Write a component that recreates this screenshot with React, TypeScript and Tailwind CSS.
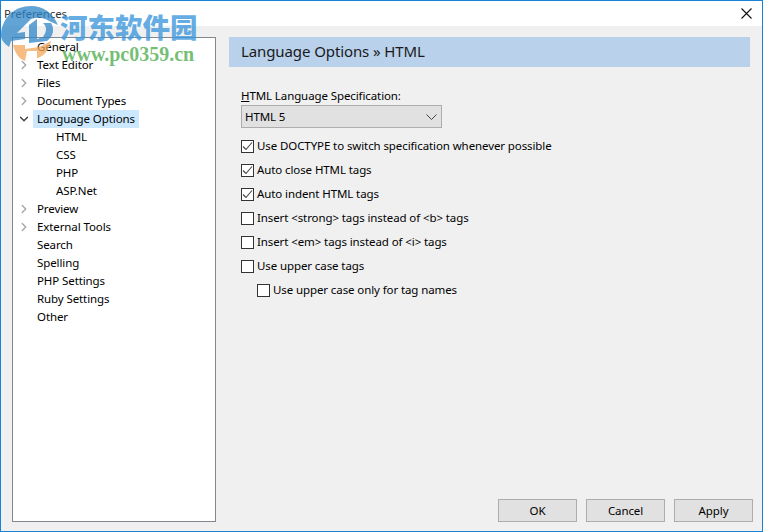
import { ChevronDown, ChevronRight } from 'lucide-react';

const tree = [
  { label: 'General' },
  { label: 'Text Editor', arrow: 'right' },
  { label: 'Files', arrow: 'right' },
  { label: 'Document Types', arrow: 'right' },
  { label: 'Language Options', arrow: 'down', selected: true },
  { label: 'HTML', child: true },
  { label: 'CSS', child: true },
  { label: 'PHP', child: true },
  { label: 'ASP.Net', child: true },
  { label: 'Preview', arrow: 'right' },
  { label: 'External Tools', arrow: 'right' },
  { label: 'Search' },
  { label: 'Spelling' },
  { label: 'PHP Settings' },
  { label: 'Ruby Settings' },
  { label: 'Other' },
];

const options = [
  { label: 'Use DOCTYPE to switch specification whenever possible', checked: true },
  { label: 'Auto close HTML tags', checked: true },
  { label: 'Auto indent HTML tags', checked: true },
  { label: 'Insert <strong> tags instead of <b> tags' },
  { label: 'Insert <em> tags instead of <i> tags' },
  { label: 'Use upper case tags' },
  { label: 'Use upper case only for tag names', indent: true },
];

function Check({ checked }: { checked?: boolean }) {
  return (
    <span className="w-[13px] h-[13px] shrink-0 border border-[#333333] bg-white flex items-center justify-center">
      {checked && (
        <svg width="11" height="11" viewBox="0 0 11 11" fill="none">
          <path d="M1 5.5 L4 8.5 L10 1.5" stroke="#444444" strokeWidth="1.1" />
        </svg>
      )}
    </span>
  );
}

function Btn({ label }: { label: string }) {
  return (
    <button className="w-[79px] h-[23px] bg-[#e1e1e1] border border-[#adadad] text-[11.5px] tracking-[-0.1px] text-black leading-none">
      {label}
    </button>
  );
}

export default function App() {
  return (
    <div className="relative w-[763px] h-[532px] overflow-hidden border border-[#1883d7] bg-[#f0f0f0] text-black font-['Noto_Sans','Open_Sans',sans-serif] text-[11.5px] tracking-[-0.1px]">
      {/* Title bar */}
      <div className="h-[25px] bg-white flex items-center justify-between pl-[3px] pr-[10px]">
        <span className="text-[#333333]">Preferences</span>
        <svg width="11" height="11" viewBox="0 0 11 11" fill="none">
          <path d="M0.5 0.5 L10.5 10.5 M10.5 0.5 L0.5 10.5" stroke="#111111" strokeWidth="1.1" />
        </svg>
      </div>

      <div className="flex h-[505px]">
        {/* Tree */}
        <div className="ml-[11px] mt-[11px] w-[204px] h-[485px] border border-[#828790] bg-white">
          {tree.map((item) => (
            <div key={item.label} className="h-[18px] flex items-center">
              <span className="w-[20px] ml-[1px] -mr-[1px] flex justify-center shrink-0">
                {item.arrow === 'right' && <ChevronRight className="w-[14px] h-[14px] text-[#a6a6a6]" strokeWidth={2.4} />}
                {item.arrow === 'down' && <ChevronDown className="w-[14px] h-[14px] text-[#404040]" strokeWidth={2.4} />}
              </span>
              <span
                className={`h-[18px] leading-[18px] pl-[4px] pr-[4px] ${item.child ? 'ml-[19px]' : ''} ${item.selected ? 'bg-[#cce8ff]' : ''}`}
              >
                {item.label}
              </span>
            </div>
          ))}
        </div>

        {/* Content */}
        <div className="flex-1 flex flex-col ml-[13px] mt-[11px]">
          <div className="w-[521px] h-[30px] bg-[#b9d1ea] flex items-center pl-[12px] pb-[1px] text-[15px] tracking-[-0.1px] text-[#1a1a1a]">
            Language Options » HTML
          </div>

          <div className="ml-[12px] mt-[21px] leading-[16px]">
            <span className="underline">H</span>TML Language Specification:
          </div>

          <div className="ml-[12px] mt-[1px] w-[201px] h-[23px] bg-[#e1e1e1] border border-[#adadad] flex items-center justify-between pl-[3px] pr-[4px]">
            <span>HTML 5</span>
            <svg width="11" height="6" viewBox="0 0 11 6" fill="none">
              <path d="M0.5 0.5 L5.5 5.5 L10.5 0.5" stroke="#444444" strokeWidth="1" />
            </svg>
          </div>

          <div className="ml-[12px] mt-[6px] flex flex-col">
            {options.map((option) => (
              <label key={option.label} className={`h-[24px] flex items-center gap-[3px] ${option.indent ? 'ml-[16px]' : ''}`}>
                <Check checked={option.checked} />
                <span>{option.label}</span>
              </label>
            ))}
          </div>

          <div className="mt-auto mb-[9px] flex gap-[9px] ml-[269px]">
            <Btn label="OK" />
            <Btn label="Cancel" />
            <Btn label="Apply" />
          </div>
        </div>
      </div>

      {/* Site watermark */}
      <div className="absolute left-0 top-0 w-[200px] h-[64px] pointer-events-none">
        <svg className="absolute left-0 top-[4px] opacity-75" width="60" height="58" viewBox="0 0 60 58">
          <path d="M0 30 C1 12 14 1 30 1 C42 1 52 8 57 20 L48 16 C42 12 36 12 30 14 L16 28 L24 27 L24 34 L10 36 L8 42 C3 38 0 35 0 30 Z" fill="#2f86c9" />
          <path d="M28 20 L36 14 L36 34 L42 32 C46 26 46 22 42 18 L50 18 C54 24 52 32 46 36 L28 38 Z" fill="#2f86c9" />
          <path d="M12 40 L24 40 L24 44 L38 42 L50 36 C48 46 42 52 36 53 L36 46 L26 46 L24 56 C18 54 14 48 12 40 Z" fill="#f2a65a" />
        </svg>
        <div className="absolute left-[59px] top-[7px] text-[27.5px] leading-[36px] font-black tracking-normal text-[#3b97dc]/80 font-['Noto_Sans_CJK_SC',sans-serif] whitespace-nowrap">
          河东软件园
        </div>
        <div className="absolute left-[61px] top-[43px] text-[20px] leading-[20px] font-bold tracking-normal text-[#5cb35c]/85 font-['Liberation_Serif',serif] whitespace-nowrap">
          www.pc0359.cn
        </div>
      </div>
    </div>
  );
}
